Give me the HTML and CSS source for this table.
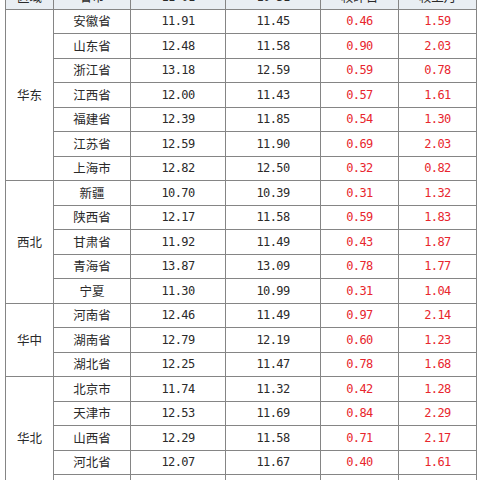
FILE: index.html
```html
<!DOCTYPE html>
<html lang="zh">
<head>
<meta charset="utf-8">
<link rel="stylesheet" href="styles.css">
</head>
<body>
<table class="price">
<colgroup>
<col class="c-region"><col class="c-prov"><col class="c-num"><col class="c-num"><col class="c-diff"><col class="c-diff2">
</colgroup>
<thead>
<tr><th>区域</th><th>省市</th><th class="n">11-01</th><th class="n">10-31</th><th>较昨日</th><th>较上月</th></tr>
</thead>
<tbody>
<tr><td class="region" rowspan="7">华东</td><td>安徽省</td><td class="n">11.91</td><td class="n">11.45</td><td class="n red">0.46</td><td class="n red">1.59</td></tr>
<tr><td>山东省</td><td class="n">12.48</td><td class="n">11.58</td><td class="n red">0.90</td><td class="n red">2.03</td></tr>
<tr><td>浙江省</td><td class="n">13.18</td><td class="n">12.59</td><td class="n red">0.59</td><td class="n red">0.78</td></tr>
<tr><td>江西省</td><td class="n">12.00</td><td class="n">11.43</td><td class="n red">0.57</td><td class="n red">1.61</td></tr>
<tr><td>福建省</td><td class="n">12.39</td><td class="n">11.85</td><td class="n red">0.54</td><td class="n red">1.30</td></tr>
<tr><td>江苏省</td><td class="n">12.59</td><td class="n">11.90</td><td class="n red">0.69</td><td class="n red">2.03</td></tr>
<tr><td>上海市</td><td class="n">12.82</td><td class="n">12.50</td><td class="n red">0.32</td><td class="n red">0.82</td></tr>
<tr><td class="region" rowspan="5">西北</td><td>新疆</td><td class="n">10.70</td><td class="n">10.39</td><td class="n red">0.31</td><td class="n red">1.32</td></tr>
<tr><td>陕西省</td><td class="n">12.17</td><td class="n">11.58</td><td class="n red">0.59</td><td class="n red">1.83</td></tr>
<tr><td>甘肃省</td><td class="n">11.92</td><td class="n">11.49</td><td class="n red">0.43</td><td class="n red">1.87</td></tr>
<tr><td>青海省</td><td class="n">13.87</td><td class="n">13.09</td><td class="n red">0.78</td><td class="n red">1.77</td></tr>
<tr><td>宁夏</td><td class="n">11.30</td><td class="n">10.99</td><td class="n red">0.31</td><td class="n red">1.04</td></tr>
<tr><td class="region" rowspan="3">华中</td><td>河南省</td><td class="n">12.46</td><td class="n">11.49</td><td class="n red">0.97</td><td class="n red">2.14</td></tr>
<tr><td>湖南省</td><td class="n">12.79</td><td class="n">12.19</td><td class="n red">0.60</td><td class="n red">1.23</td></tr>
<tr><td>湖北省</td><td class="n">12.25</td><td class="n">11.47</td><td class="n red">0.78</td><td class="n red">1.68</td></tr>
<tr><td class="region" rowspan="5">华北</td><td>北京市</td><td class="n">11.74</td><td class="n">11.32</td><td class="n red">0.42</td><td class="n red">1.28</td></tr>
<tr><td>天津市</td><td class="n">12.53</td><td class="n">11.69</td><td class="n red">0.84</td><td class="n red">2.29</td></tr>
<tr><td>山西省</td><td class="n">12.29</td><td class="n">11.58</td><td class="n red">0.71</td><td class="n red">2.17</td></tr>
<tr><td>河北省</td><td class="n">12.07</td><td class="n">11.67</td><td class="n red">0.40</td><td class="n red">1.61</td></tr>
<tr><td>内蒙古</td><td class="n">11.86</td><td class="n">11.38</td><td class="n red">0.48</td><td class="n red">1.52</td></tr>
</tbody>
</table>
</body>
</html>
```

FILE: styles.css
```css
html, body {
  margin: 0;
  padding: 0;
  background: #ffffff;
}
body {
  font-family: "Noto Sans CJK SC", "DejaVu Sans", sans-serif;
  color: #2a2a2a;
}
.price {
  border-collapse: collapse;
  table-layout: fixed;
  margin: -16px 0 0 5px;
  width: 471px;
}
.c-region { width: 48px; }
.c-prov { width: 77px; }
.c-num { width: 95px; }
.c-diff { width: 78px; }
.c-diff2 { width: 78px; }
.price th,
.price td {
  border: 1px solid #858585;
  height: 23.5px;
  padding: 0;
  text-align: center;
  vertical-align: middle;
  font-size: 12.5px;
  font-weight: normal;
  line-height: 14px;
  white-space: nowrap;
}
.price th {
  background: #e9eef3;
}
.price .n {
  font-family: "DejaVu Sans Mono", monospace;
  font-size: 12px;
  letter-spacing: -0.6px;
}
.price th.n {
  font-family: "DejaVu Sans Mono", monospace;
}
.price .red {
  color: #e8262e;
}
.price .region {
  font-size: 12.5px;
}
```
